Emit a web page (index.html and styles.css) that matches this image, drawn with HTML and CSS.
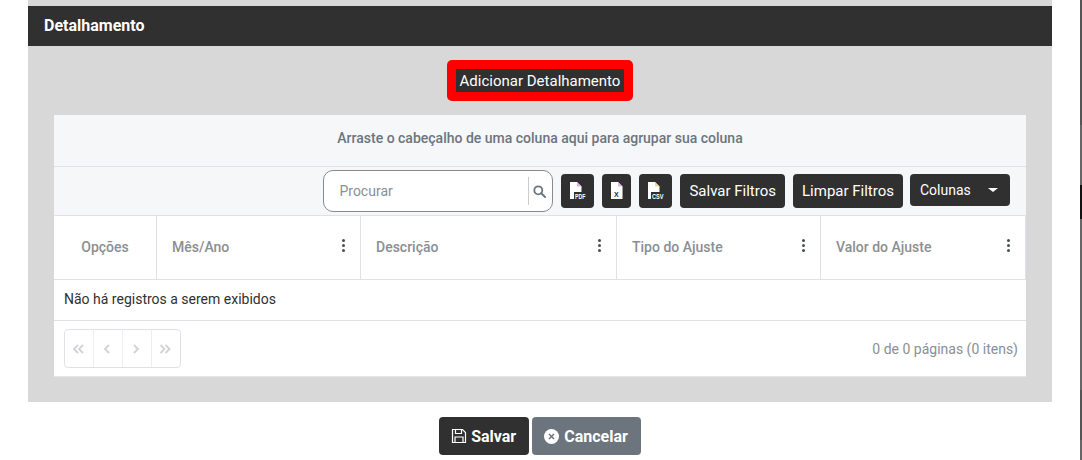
FILE: index.html
```html
<!DOCTYPE html>
<html lang="pt-BR">
<head>
  <meta charset="UTF-8" />
  <title>Detalhamento</title>
  <link rel="stylesheet" href="styles.css">
</head>
<body>
  <main class="page">
    <section class="panel">
      <h2 class="panel-title">Detalhamento</h2>
      <div class="panel-body">
        <div class="add-row">
          <div class="add-outline"><button class="add-btn">Adicionar Detalhamento</button></div>
        </div>

        <div class="grid">
          <div class="group-bar">Arraste o cabeçalho de uma coluna aqui para agrupar sua coluna</div>

          <div class="toolbar">
            <div class="search">
              <input type="text" placeholder="Procurar">
              <span class="search-icon">
                <svg width="13" height="13" viewBox="0 0 13 13"><circle cx="5.300" cy="5.300" r="4" fill="none" stroke="#6c757d" stroke-width="1.800"/><path d="M8.300 8.300l3.800 3.800" stroke="#6c757d" stroke-width="2" stroke-linecap="round"/></svg>
              </span>
            </div>
            <button class="btn btn-file btn-pdf">
              <svg width="24" height="18" viewBox="-4 0 24 18"><path d="M0 0h7l4.500 4.500V17H0z" fill="#fff"/><path d="M7 0v4.500h4.500z" fill="#d9b8e8"/><rect x="4" y="10" width="12" height="8" fill="#303030"/><text x="5" y="16.500" class="file-label" textLength="10.500" lengthAdjust="spacingAndGlyphs">PDF</text></svg>
            </button>
            <button class="btn btn-file btn-xls">
              <svg width="12" height="18" viewBox="0 0 12 18"><path d="M0 0h7l4.500 4.500V17H0z" fill="#fff"/><path d="M7 0v4.500h4.500z" fill="#d9b8e8"/><text x="3" y="14.500" class="file-label file-label-dark">X</text></svg>
            </button>
            <button class="btn btn-file btn-csv">
              <svg width="24" height="18" viewBox="-4 0 24 18"><path d="M0 0h7l4.500 4.500V17H0z" fill="#fff"/><path d="M7 0v4.500h4.500z" fill="#ead9a0"/><rect x="3" y="10" width="13" height="8" fill="#303030"/><text x="4" y="16.500" class="file-label" textLength="11.500" lengthAdjust="spacingAndGlyphs">CSV</text></svg>
            </button>
            <button class="btn btn-text">Salvar Filtros</button>
            <button class="btn btn-text btn-clear">Limpar Filtros</button>
            <button class="btn btn-columns">Colunas<span class="caret"></span></button>
          </div>

          <div class="grid-head">
            <div class="col col-options"><span>Opções</span></div>
            <div class="col"><span>Mês/Ano</span><span class="kebab"></span></div>
            <div class="col"><span>Descrição</span><span class="kebab"></span></div>
            <div class="col"><span>Tipo do Ajuste</span><span class="kebab"></span></div>
            <div class="col"><span>Valor do Ajuste</span><span class="kebab"></span></div>
          </div>

          <div class="no-records">Não há registros a serem exibidos</div>

          <div class="pager">
            <div class="pager-buttons">
              <span class="page-btn"><svg width="12" height="10" viewBox="0 0 12 10"><path d="M5 1L1 5l4 4M10 1L6 5l4 4"/></svg></span>
              <span class="page-btn"><svg width="12" height="10" viewBox="0 0 12 10"><path d="M7 1L3 5l4 4"/></svg></span>
              <span class="page-btn"><svg width="12" height="10" viewBox="0 0 12 10"><path d="M3 1l4 4-4 4"/></svg></span>
              <span class="page-btn"><svg width="12" height="10" viewBox="0 0 12 10"><path d="M.5 1l4 4-4 4M5.500 1l4 4-4 4"/></svg></span>
            </div>
            <span class="pager-info">0 de 0 páginas (0 itens)</span>
          </div>
        </div>
      </div>
    </section>

    <div class="form-actions">
      <button class="btn btn-save">
        <svg width="16" height="16" viewBox="0 0 16 16"><path d="M1.500 1.500h10l3 3v10h-13z" fill="none" stroke="#fff" stroke-width="1.200"/><path d="M4.500 1.500v4h6v-4M4 14.500v-5.500h8v5.500" fill="none" stroke="#fff" stroke-width="1.200"/></svg>
        Salvar
      </button>
      <button class="btn btn-cancel">
        <svg width="15" height="15" viewBox="0 0 15 15"><circle cx="7.500" cy="7.500" r="7.500" fill="#fff"/><path d="M5 5l5 5M10 5l-5 5" stroke="#6c757d" stroke-width="1.500"/></svg>
        Cancelar
      </button>
    </div>
  </main>
  <div class="page-edge"></div>
</body>
</html>
```

FILE: styles.css
```css
* {
  box-sizing: border-box;
}

html,
body {
  height: 460px;
  overflow: hidden;
}

body {
  display: flex;
  margin: 0;
  background: #fff;
  font-family: Roboto, "Liberation Sans", sans-serif;
  font-size: 14px;
  color: #303030;
}

button {
  font-family: inherit;
}

/* dark sliver down the right side of the window */
.page-edge {
  width: 2px;
  margin-left: 28px;
  background: linear-gradient(
    #555 0 125px,
    #666 125px 185px,
    #111 185px 219px,
    #666 219px 390px,
    #555 390px 440px,
    #666 440px
  );
}

.page {
  width: 1024px;
  margin-left: 28px;
}

.panel {
  background: #d8d8d8;
  padding-top: 6px;
}

.panel-title {
  margin: 0;
  height: 40px;
  padding-left: 16px;
  background: #303030;
  color: #fff;
  font-size: 16px;
  font-weight: 700;
  line-height: 39px;
}

.panel-body {
  padding: 14px 26px 25px;
}

.add-row {
  display: flex;
  justify-content: center;
  margin-bottom: 14px;
}

.add-outline {
  background: #ff0000;
  padding: 9px 9px 8px 9px;
  border-radius: 5px;
  height: 41px;
}

.add-btn {
  display: block;
  height: 23px;
  width: 168px;
  padding: 0;
  border: 0;
  background: #303030;
  color: #fff;
  font-size: 15px;
}

.grid {
  background: #fff;
}

.group-bar {
  height: 52px;
  background: #f6f7f9;
  border-bottom: 1px solid #dee2e6;
  text-align: center;
  line-height: 47px;
  font-weight: 500;
  color: #6c757d;
}

.toolbar {
  display: flex;
  align-items: flex-start;
  justify-content: flex-end;
  height: 49px;
  padding: 3px 16px 0 0;
  background: #f6f7f9;
  border-bottom: 1px solid #dee2e6;
}

.search {
  display: flex;
  align-items: center;
  width: 230px;
  height: 42px;
  margin-right: 8px;
  background: #fff;
  border: 1px solid #8a8a8a;
  border-radius: 10px;
}

.search input {
  flex: 1;
  min-width: 0;
  border: 0;
  outline: 0;
  padding: 0 0 0 15px;
  background: transparent;
  font-family: inherit;
  font-size: 14px;
}

.search input::placeholder {
  color: #8a8f94;
}

.search-icon {
  display: flex;
  align-items: center;
  height: 28px;
  padding-left: 4px;
  width: 24px;
  border-left: 1px solid #ccc;
}

.btn {
  border: 0;
  border-radius: 4px;
  background: #303030;
  color: #fff;
}

.btn-file {
  display: flex;
  align-items: center;
  justify-content: center;
  height: 34px;
  margin: 4px 8px 0 0;
  padding: 0;
}

.btn-pdf,
.btn-csv {
  width: 33px;
}

.btn-xls {
  width: 29px;
}

.file-label {
  font-family: "Liberation Sans", sans-serif;
  font-size: 7px;
  font-weight: 700;
  fill: #fff;
}

.file-label-dark {
  fill: #1c2f5a;
}

.btn-text {
  height: 34px;
  margin: 4px 8px 0 0;
  padding: 0 9px;
  font-size: 15px;
}

.btn-clear {
  margin-right: 7px;
}

.btn-columns {
  display: flex;
  align-items: center;
  height: 32px;
  width: 100px;
  margin-top: 4px;
  padding: 0 0 0 10px;
  font-size: 14px;
}

.caret {
  margin-left: 17px;
  border-top: 4px solid #fff;
  border-left: 5px solid transparent;
  border-right: 5px solid transparent;
}

.grid-head {
  display: grid;
  grid-template-columns: 103px 204px 256px 204px 205px;
  height: 64px;
  border-bottom: 1px solid #dee2e6;
}

.col {
  display: flex;
  align-items: center;
  justify-content: space-between;
  padding: 0 15px 1px;
  border-right: 1px solid #dee2e6;
  font-weight: 500;
  color: #8a8f94;
}

.col-options {
  justify-content: center;
}

.kebab {
  width: 3px;
  height: 3px;
  margin-bottom: 3px;
  border-radius: 50%;
  background: #495057;
  box-shadow: 0 -5px 0 #495057, 0 5px 0 #495057;
}

.no-records {
  height: 41px;
  padding-left: 10px;
  border-bottom: 1px solid #dee2e6;
  line-height: 39px;
  color: #303030;
}

.pager {
  display: flex;
  align-items: center;
  justify-content: space-between;
  height: 56px;
  padding: 0 8px 0 10px;
  border-bottom: 1px solid #e4e6ea;
}

.pager-buttons {
  display: flex;
  height: 39px;
  border: 1px solid #dee2e6;
  border-radius: 4px;
}

.page-btn {
  display: flex;
  align-items: center;
  justify-content: center;
  width: 29px;
  border-left: 1px solid #eee;
}

.page-btn:first-child {
  width: 28px;
  border-left: 0;
}

.page-btn svg {
  fill: none;
  stroke: #d0d3d6;
  stroke-width: 1.800;
}

.pager-info {
  color: #8a8f94;
}

.form-actions {
  display: flex;
  justify-content: center;
  gap: 3px;
  margin-top: 15px;
}

.form-actions .btn {
  display: flex;
  align-items: center;
  gap: 4px;
  height: 38px;
  font-size: 16px;
  font-weight: 700;
}

.form-actions .btn-save {
  padding: 0 13px 0 12px;
}

.form-actions .btn-cancel {
  gap: 5px;
  padding: 0 13px 0 12px;
  background: #6c757d;
}
```
